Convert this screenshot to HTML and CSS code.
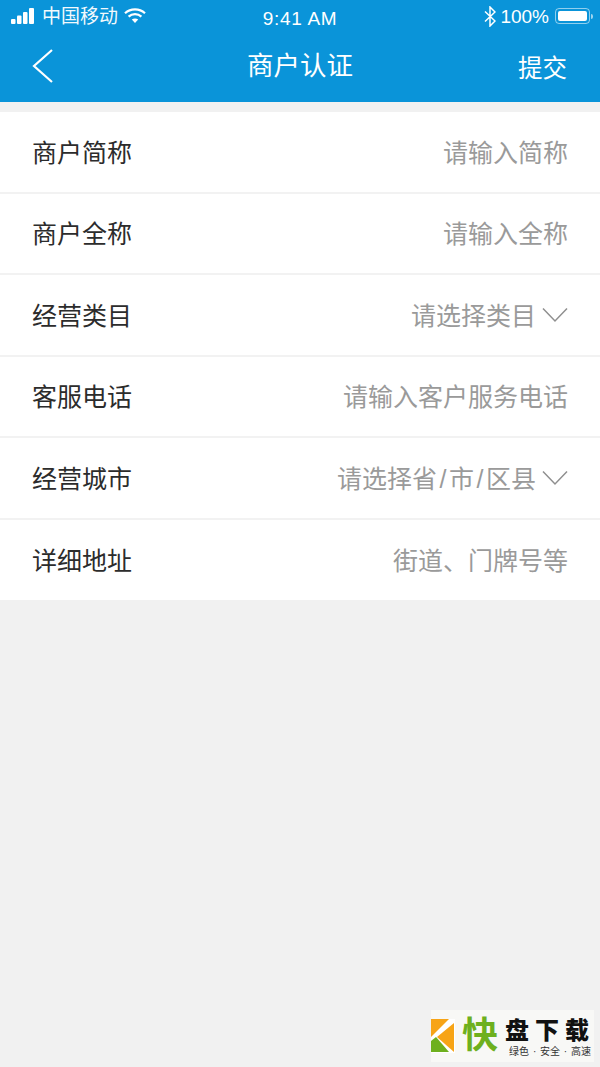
FILE: index.html
```html
<!DOCTYPE html>
<html lang="zh-CN">
<head>
<meta charset="utf-8">
<title>商户认证</title>
<link rel="stylesheet" href="styles.css">
</head>
<body>
<div class="page">
  <header class="header">
    <div class="status">
      <div class="status-left">
        <svg class="signal" width="24" height="16" viewBox="0 0 24 16"><rect x="0" y="11" width="4.500" height="5" rx="1"/><rect x="6" y="7.500" width="4.500" height="8.500" rx="1"/><rect x="12" y="4" width="4.500" height="12" rx="1"/><rect x="18" y="0" width="5" height="16" rx="1"/></svg>
        <span class="carrier">中国移动</span>
        <svg class="wifi" width="22" height="15" viewBox="0 0 22 15"><path d="M1 5.200C6.600 0 15.400 0 21 5.200" fill="none" stroke="#fff" stroke-width="2.200"/><path d="M4.600 8.600c3.600-3.200 9.200-3.200 12.800 0" fill="none" stroke="#fff" stroke-width="2.200"/><path d="M7.800 11.600c1.900-1.500 4.500-1.500 6.400 0L11 15z" fill="#fff"/></svg>
      </div>
      <div class="status-time">9:41 AM</div>
      <div class="status-right">
        <svg class="bt" width="12" height="21" viewBox="0 0 12 21"><path d="M1 5.500l10 9.500-5 5V1l5 5-10 9.500" fill="none" stroke="#fff" stroke-width="1.500"/></svg>
        <span class="battery-text">100%</span>
        <span class="battery"><span class="battery-fill"></span></span>
        <span class="battery-tip"></span>
      </div>
    </div>
    <div class="nav">
      <svg class="back" width="24" height="36" viewBox="0 0 24 36"><path d="M21 2 3 18l18 16" fill="none" stroke="#fff" stroke-width="2.200"/></svg>
      <h1 class="title">商户认证</h1>
      <span class="submit">提交</span>
    </div>
  </header>
  <main class="form">
    <div class="row"><span class="label">商户简称</span><span class="hint">请输入简称</span></div>
    <div class="row"><span class="label">商户全称</span><span class="hint">请输入全称</span></div>
    <div class="row"><span class="label">经营类目</span><span class="hint">请选择类目</span><svg class="chev" width="26" height="16" viewBox="0 0 26 16"><path d="M1 1.500 13 14 25 1.500" fill="none" stroke="#8f8f8f" stroke-width="1.500"/></svg></div>
    <div class="row"><span class="label">客服电话</span><span class="hint">请输入客户服务电话</span></div>
    <div class="row"><span class="label">经营城市</span><span class="hint">请选择省<span class="slash">/</span>市<span class="slash">/</span>区县</span><svg class="chev" width="26" height="16" viewBox="0 0 26 16"><path d="M1 1.500 13 14 25 1.500" fill="none" stroke="#8f8f8f" stroke-width="1.500"/></svg></div>
    <div class="row"><span class="label">详细地址</span><span class="hint">街道、门牌号等</span></div>
  </main>
  <aside class="badge">
    <svg class="badge-logo" width="24" height="34" viewBox="0 0 24 34"><rect width="24" height="34" fill="#fff"/><path d="M0 0h18L0 18z" fill="#f7a416"/><path d="M23 4v29L6 18z" fill="#f7a416"/><path d="M0 22 5 18l13 15H0z" fill="#6eb01e"/></svg>
    <span class="badge-kuai">快</span>
    <span class="badge-text"><span class="badge-name">盘下载</span><span class="badge-sub">绿色 · 安全 · 高速</span></span>
  </aside>
</div>
</body>
</html>
```
FILE: styles.css
```css
* { box-sizing: border-box; }
html, body { margin: 0; padding: 0; }
body {
  width: 600px;
  height: 1067px;
  overflow: hidden;
  background: #f1f1f1;
  font-family: "Liberation Sans", "Noto Sans CJK SC", sans-serif;
}
.page { position: relative; width: 600px; height: 1067px; }
.header { height: 102px; background: #0a94d9; color: #fff; }
.status {
  height: 32px;
  display: grid;
  grid-template-columns: 1fr auto 1fr;
  align-items: center;
  padding: 0 7px 0 11px;
}
.status-left { display: flex; align-items: center; }
.signal { fill: #fff; }
.carrier { font-size: 19px; margin-left: 7px; line-height: 30px; padding-top: 1px; opacity: .95; }
.wifi { margin-left: 6px; margin-top: -1px; }
.status-time { font-size: 19px; letter-spacing: .7px; padding-top: 5px; margin-right: 4px; }
.status-right { display: flex; align-items: center; justify-content: flex-end; }
.bt { margin-top: 0; }
.battery-text { font-size: 19px; margin-left: 4px; margin-top: 2px; }
.battery {
  width: 35px;
  height: 16px;
  margin-left: 6px;
  padding: 2px;
  border: 1px solid rgba(255, 255, 255, .55);
  border-radius: 4px;
  display: block;
}
.battery-fill { display: block; height: 100%; background: #fff; border-radius: 2px; }
.battery-tip { width: 2px; height: 5px; margin-left: 1px; background: rgba(255, 255, 255, .6); border-radius: 0 2px 2px 0; }
.nav {
  height: 70px;
  position: relative;
  display: flex;
  align-items: center;
  justify-content: center;
  padding-bottom: 2px;
}
.back { position: absolute; left: 31px; top: 16px; }
.title { margin: 0; font-size: 26.500px; font-weight: 400; line-height: 1; }
.submit { position: absolute; right: 33px; top: 24px; font-size: 24.500px; line-height: 1.100; }
.form { margin-top: 10px; background: #fff; }
.row {
  height: 81.500px;
  display: flex;
  align-items: center;
  padding: 0 32px 2px 32px;
  border-bottom: 2px solid #f2f2f2;
}
.row:last-child { border-bottom: 0; height: 80.500px; }
.label { flex: 1; font-size: 25px; color: #2c2c2c; }
.hint { font-size: 25px; color: #9a9a9a; }
.slash { padding: 0 2.500px; }
.chev { margin-left: 6px; margin-top: 2px; }
.badge {
  position: absolute;
  left: 431px;
  top: 1010px;
  width: 163px;
  height: 52px;
  background: #f8f8f6;
  display: flex;
  align-items: center;
  overflow: hidden;
}
.badge-logo { flex: none; }
.badge-kuai { width: 36px; margin-left: 7px; font-size: 36px; font-weight: 700; color: #6eb01e; line-height: 1; flex: none; }
.badge-text { display: flex; flex-direction: column; align-items: center; flex: none; margin-left: 7px; margin-top: 4px; }
.badge-name { font-size: 24px; font-weight: 900; line-height: 24px; letter-spacing: 6px; color: #111; white-space: nowrap; }
.badge-sub { font-size: 10px; line-height: 13px; margin-top: 2px; color: #333; white-space: nowrap; word-spacing: 1px; }
```
